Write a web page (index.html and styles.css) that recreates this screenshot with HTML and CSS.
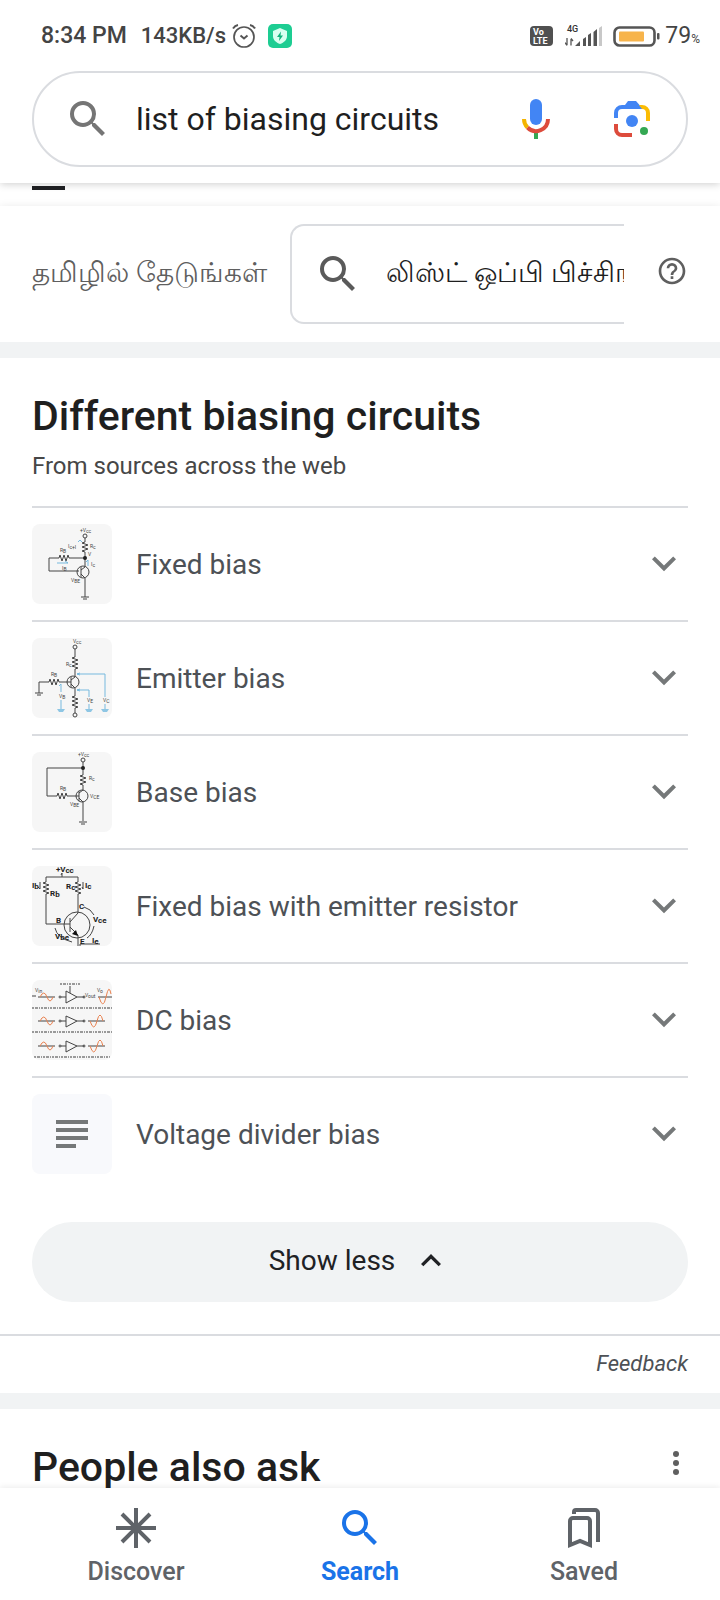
FILE: index.html
```html
<!DOCTYPE html>
<html lang="en">
<head>
<meta charset="utf-8">
<meta name="viewport" content="width=device-width, initial-scale=1">
<title>list of biasing circuits</title>
<link rel="stylesheet" href="styles.css">
</head>
<body>
<svg class="defs" aria-hidden="true">
  <symbol id="search" viewBox="0 0 24 24"><path fill="currentColor" d="M15.5 14h-.79l-.28-.27A6.47 6.47 0 0 0 16 9.500 6.500 6.500 0 1 0 9.500 16c1.610 0 3.090-.59 4.230-1.570l.27.28v.79l5 4.990L20.490 19l-4.990-5zm-6 0C7.010 14 5 11.990 5 9.500S7.010 5 9.500 5 14 7.010 14 9.500 11.990 14 9.500 14z"/></symbol>
  <symbol id="chevron" viewBox="0 0 24 24"><path fill="currentColor" d="M16.590 8.200 12 12.780 7.410 8.200 6 9.610l6 6 6-6z"/></symbol>
</svg>
<div class="app">
  <header class="header">
    <div class="status">
      <span class="time">8:34 PM</span>
      <span class="speed">143KB/s</span>
      <svg class="alarm" viewBox="0 0 24 24" fill="none" stroke="#555" stroke-width="1.700"><circle cx="12" cy="13" r="10"/><path d="M8.500 11.500l3.500 3 3.500-3M1 4.500Q3 1.500 6 1M23 4.500Q21 1.500 18 1" stroke-width="2"/></svg>
      <svg class="shield" viewBox="0 0 24 24"><rect width="24" height="24" rx="5" fill="#1dcd92"/><path fill="#d9fff0" d="M12 4l7 3v5c0 4-3 6.500-7 8-4-1.500-7-4-7-8V7z"/><path fill="#12b37c" d="M13 7.500l-4 5.500h2.500L11 17l4-5.500h-2.500z"/></svg>
      <span class="spacer"></span>
      <svg class="volte" viewBox="0 0 23 20"><rect width="23" height="20" rx="4" fill="#505050"/><g fill="#fff" font-weight="700" font-size="9"><text x="3" y="9">Vo</text><text x="3" y="18">LTE</text></g></svg>
      <svg class="signal" viewBox="0 0 38 24"><text x="2" y="8" font-size="9" fill="#333" font-weight="500">4G</text><path d="M2 14v7M0 18.500L2 21.500M6 21.500V15M8 17L6 14.500" fill="none" stroke="#555" stroke-width="1.300"/><path fill="#555" d="M10 22l5-5v5zM18 15l3-2v9h-3zM23 11l3-2v13h-3zM28.500 8l3.500-3v17h-3.500z"/><path fill="#c8c8c8" d="M34 4l3-2v20h-3z"/></svg>
      <svg class="battery" viewBox="0 0 47 22"><rect x="1.500" y="2.500" width="40" height="18" rx="5" fill="none" stroke="#555" stroke-width="2.600"/><rect x="6" y="6.500" width="25" height="10" rx="1" fill="#f7b44b"/><rect x="44" y="8" width="2.500" height="6.500" rx="1" fill="#555"/></svg>
      <span class="level">79<small>%</small></span>
    </div>
    <form class="searchbar">
      <svg class="icon gray"><use href="#search"/></svg>
      <input class="query" type="text" aria-label="Search" value="list of biasing circuits">
      <button class="plain" type="button" aria-label="Voice search"><svg class="icon" viewBox="0 0 48 48"><rect x="18" y="4" width="12" height="26" rx="6" fill="#4285f4"/><path d="M22 38h4v6h-4z" fill="#34a853"/><path d="M12 24A12 12 0 0 0 15.500 32.500" fill="none" stroke="#f4b400" stroke-width="4"/><path d="M15.500 32.500A12 12 0 0 0 36 24" fill="none" stroke="#dd4b3c" stroke-width="4"/></svg></button>
      <button class="plain" type="button" aria-label="Search with camera"><svg class="icon" viewBox="0 0 48 48"><path d="M6 23v-5a8 8 0 0 1 8-8h3l3-4h8l7 8H14a4 4 0 0 0-4 4v5z" fill="#4285f4"/><path d="M31 10h3a8 8 0 0 1 8 8v8h-4v-8a4 4 0 0 0-4-4z" fill="#fbbc04"/><path d="M6 29h4v5a4 4 0 0 0 4 4h10v4H14a8 8 0 0 1-8-8z" fill="#dd4b3c"/><circle cx="24" cy="26" r="6" fill="#4285f4"/><circle cx="36" cy="36" r="4" fill="#34a853"/></svg></button>
    </form>
  </header>

  <main class="content">
    <div class="tabs"><span class="tab-mark"></span></div>
    <form class="translate">
      <label class="translate-label" for="tamil">தமிழில் தேடுங்கள்</label>
      <div class="translate-box">
        <svg class="icon dark"><use href="#search"/></svg>
        <input id="tamil" class="translate-input" type="text" value="லிஸ்ட் ஒப்பி பிச்சிங்">
      </div>
      <button class="plain help-button" type="button" aria-label="Help"><svg class="help" viewBox="0 0 24 24"><path fill="#5f5f5f" d="M11 18h2v-2h-2v2zm1-16C6.480 2 2 6.480 2 12s4.480 10 10 10 10-4.480 10-10S17.520 2 12 2zm0 18c-4.410 0-8-3.590-8-8s3.590-8 8-8 8 3.590 8 8-3.590 8-8 8zm0-14a4 4 0 0 0-4 4h2a2 2 0 1 1 4 0c0 2-3 1.750-3 5h2c0-2.250 3-2.500 3-5a4 4 0 0 0-4-4z"/></svg></button>
    </form>

    <section class="card">
      <h2 class="title">Different biasing circuits</h2>
      <p class="subtitle">From sources across the web</p>
      <ul class="list">
        <li><button class="row" type="button" aria-expanded="false">
          <svg class="thumb" viewBox="0 0 80 80"><g class="wire"><circle cx="53" cy="12" r="2"/><path d="M53 14v4l-3 1 6 2-6 2 6 2-6 2 3 1v15M53 34H37l-1-3-2 6-2-6-2 6-2-6-1 3H17v13h30M49 43v10M49 46l4-3M49 50l4 4v19M49 73h8M51 75h4"/><circle cx="51" cy="48" r="6"/></g><circle cx="53" cy="34" r="2" fill="#222"/><path class="blue" d="M25 39h11l-3-2M56 42v-6l-2 2M46 18l2-2 2 2"/><g class="note"><text x="48" y="8">+V<tspan dy="1">cc</tspan></text><text x="58" y="24">R<tspan dy="1">c</tspan></text><text x="36" y="24">I<tspan dy="1">c</tspan>+I</text><text x="28" y="28">R<tspan dy="1">B</tspan></text><text x="30" y="46">I<tspan dy="1">B</tspan></text><text x="59" y="42">I<tspan dy="1">c</tspan></text><text x="56" y="32">V</text><text x="39" y="58">V<tspan dy="1">BE</tspan></text></g></svg>
          <span class="name">Fixed bias</span><svg class="chev"><use href="#chevron"/></svg></button></li>
        <li><button class="row" type="button" aria-expanded="false">
          <svg class="thumb" viewBox="0 0 80 80"><path class="blue" d="M48 35l-3 1 3 1M45 36h28v23M73 66v5M48 51l-3 1 3 1M45 52h12v7M57 66v5M29 54v-8l-2 2M29 62v9"/><path class="earth" d="M25 71h8l-2 3h-4zM53 71h8l-2 3h-4zM69 71h8l-2 3h-4z"/><g class="wire"><circle cx="43" cy="9" r="2"/><circle cx="43" cy="77" r="2"/><path d="M43 11v8l-3 1 6 2-6 2 6 2-6 2 6 2-3 1v8l-4 3M39 46l4 4v8l-3 1 6 2-6 2 6 2-6 2 6 2-3 1v5M39 39v10M39 44H27l-1-3-2 6-2-6-2 6-2-6-1 3H7v11M3 55h8M5 57h4"/><circle cx="41" cy="44" r="6"/></g><g class="note"><text x="41" y="5">V<tspan dy="1">cc</tspan></text><text x="34" y="28">R<tspan dy="1">c</tspan></text><text x="19" y="38">R<tspan dy="1">B</tspan></text><text x="27" y="60">V<tspan dy="1">B</tspan></text><text x="55" y="64">V<tspan dy="1">E</tspan></text><text x="71" y="64">V<tspan dy="1">C</tspan></text></g></svg>
          <span class="name">Emitter bias</span><svg class="chev"><use href="#chevron"/></svg></button></li>
        <li><button class="row" type="button" aria-expanded="false">
          <svg class="thumb" viewBox="0 0 80 80"><g class="wire"><circle cx="51" cy="8" r="2"/><path d="M51 10v13l-3 1 6 2-6 2 6 2-6 2 3 1v5l-4 3M51 16H15v28h10l1-3 2 6 2-6 2 6 2-6 1 3h12M47 39v10M47 46l4 4v19M47 70h8M49 72h4"/><circle cx="50" cy="44" r="6"/></g><circle cx="51" cy="16" r="2" fill="#222"/><g class="note"><text x="46" y="4">+V<tspan dy="1">cc</tspan></text><text x="57" y="28">R<tspan dy="1">c</tspan></text><text x="28" y="38">R<tspan dy="1">B</tspan></text><text x="58" y="46">V<tspan dy="1">CE</tspan></text><text x="38" y="54">V<tspan dy="1">BE</tspan></text></g></svg>
          <span class="name">Base bias</span><svg class="chev"><use href="#chevron"/></svg></button></li>
        <li><button class="row" type="button" aria-expanded="false">
          <svg class="thumb" viewBox="0 0 80 80"><g class="wire"><path d="M30 11V7l-1 2M14 16v-5h32v5M14 16l-3 1 6 2-6 2 6 2-6 2 6 2-3 1v30h24M46 16l-3 1 6 2-6 2 6 2-6 2 6 2-3 1v19l-8 9M38 52v14M38 61l8 8v11M48 80v-2h20M8 16v7l-2-2M51 16v7l-1-2M52 41q7 2 10 8M62 60q-2 9-7 12M23 62q2 10 17 14"/><circle cx="45" cy="59" r="13"/></g><path d="M46 70l-6-2 4-4z" fill="#111"/><g class="note bold"><text x="24" y="6">+V<tspan dy="1">cc</tspan></text><text x="0" y="22">I<tspan dy="1">b</tspan></text><text x="18" y="30">R<tspan dy="1">b</tspan></text><text x="34" y="23">R<tspan dy="1">c</tspan></text><text x="53" y="22">I<tspan dy="1">c</tspan></text><text x="47" y="43">C</text><text x="24" y="57">B</text><text x="61" y="56">V<tspan dy="1">ce</tspan></text><text x="23" y="73">V<tspan dy="1">be</tspan></text><text x="48" y="78">E</text><text x="60" y="77">I<tspan dy="1">e</tspan></text></g></svg>
          <span class="name">Fixed bias with emitter resistor</span><svg class="chev"><use href="#chevron"/></svg></button></li>
        <li><button class="row" type="button" aria-expanded="false">
          <svg class="thumb" viewBox="0 0 80 80"><g class="wire"><path d="M0 16h4M6 17h17M29 17h5v-6l11 6-11 6v-6M45 17h7M66 17h14M38 6v7M6 41h17M29 41h5v-5l11 5-11 6v-6M45 41h7M56 41h17M6 66h17M29 66h5v-5l11 5-11 6v-6M45 66h7M56 66h17"/><circle cx="28" cy="17" r="1"/><circle cx="52" cy="17" r="1"/><circle cx="28" cy="41" r="1"/><circle cx="52" cy="41" r="1"/><circle cx="28" cy="66" r="1"/><circle cx="52" cy="66" r="1"/></g><path class="wave" d="M8 17q4-8 7 0t6 0M8 41q4-8 7 0t6 0M8 66q4-8 7 0t6 0M67 17q4 14 7 0t5-3M58 41q4 12 7 0t6 0M58 66q4 12 7 0t6 0"/><path class="caption" d="M0 28h80M0 52h80M2 77h76M28 4h21"/><g class="note"><text x="3" y="12">V<tspan dy="1">in</tspan></text><text x="53" y="17">V<tspan dy="1">out</tspan></text><text x="65" y="12">V<tspan dy="1">o</tspan></text></g></svg>
          <span class="name">DC bias</span><svg class="chev"><use href="#chevron"/></svg></button></li>
        <li><button class="row" type="button" aria-expanded="false">
          <svg class="thumb pale" viewBox="0 0 80 80"><path fill="#757879" d="M24 26h32v4H24zM24 34h32v4H24zM24 42h32v4H24zM24 50h20v4H24z"/></svg>
          <span class="name">Voltage divider bias</span><svg class="chev"><use href="#chevron"/></svg></button></li>
      </ul>
      <button class="less" type="button">Show less <svg class="chev-up"><use href="#chevron"/></svg></button>
    </section>
    <div class="feedback"><a href="#feedback">Feedback</a></div>
    <section class="ask">
      <h2 class="title">People also ask</h2>
      <button class="plain" type="button" aria-label="More options"><svg class="dots" viewBox="0 0 6 24"><g fill="#5f5f5f"><circle cx="3" cy="3" r="3"/><circle cx="3" cy="12" r="3"/><circle cx="3" cy="21" r="3"/></g></svg></button>
    </section>
  </main>

  <nav class="nav">
    <a class="nav-item" href="#discover"><svg class="icon" viewBox="0 0 48 48" stroke="currentColor" stroke-width="4"><path d="M24 4v40M4 24h40M10 10l28 28M38 10L10 38"/></svg>Discover</a>
    <a class="nav-item active" href="#search-tab" aria-current="page"><svg class="icon"><use href="#search"/></svg>Search</a>
    <a class="nav-item" href="#saved"><svg class="icon" viewBox="0 0 48 48" fill="none" stroke="currentColor" stroke-width="4"><path d="M10 41V17a3 3 0 0 1 3-3h14a3 3 0 0 1 3 3v24l-10-4z"/><path d="M14 10V8a2 2 0 0 1 2-2h19a3 3 0 0 1 3 3v29" /></svg>Saved</a>
  </nav>
</div>
</body>
</html>
```
FILE: styles.css
```css
* { box-sizing: border-box; }
body { margin: 0; background: #fff; color: #1f1f1f; font-family: Roboto, "Noto Sans", sans-serif; }
button, input { font: inherit; color: inherit; border: 0; background: none; padding: 0; margin: 0; }
a { color: inherit; text-decoration: none; }
.defs { position: absolute; width: 0; height: 0; }
.app { display: flex; flex-direction: column; height: 100vh; }

.header { position: relative; z-index: 1; flex: none; background: #fff; padding: 0 32px 16px; box-shadow: 0 1px 8px rgba(0, 0, 0, 0.2); }
.status { display: flex; align-items: center; height: 71px; margin: 0 -12px 0 9px; color: #444; font-weight: 500; }
.time { font-size: 23px; }
.speed { font-size: 22px; margin-left: 14px; }
.alarm { width: 24px; height: 24px; margin-left: 6px; }
.shield { width: 24px; height: 24px; margin-left: 12px; }
.spacer { flex: 1; }
.volte { width: 23px; height: 20px; margin-right: 12px; }
.signal { width: 38px; height: 24px; margin-right: 10px; }
.battery { width: 47px; height: 22px; margin-right: 5px; }
.level { font-size: 23px; font-weight: 400; }
.level small { font-size: 12px; }

.searchbar { display: flex; align-items: center; height: 96px; padding: 0 30px; border: 2px solid #dadce0; border-radius: 48px; }
.icon { display: block; flex: none; width: 48px; height: 48px; }
.gray { color: #757575; }
.dark { color: #5a5a5a; }
.plain { display: block; flex: none; }
.query { flex: 1; min-width: 0; margin-left: 24px; font-size: 32px; outline: 0; }
.searchbar .plain + .plain { margin-left: 48px; }

.content { flex: 1; min-height: 0; overflow: hidden; }
.tabs { height: 23px; padding: 3px 32px 0; }
.tab-mark { display: block; width: 33px; height: 4px; background: #202124; }
.translate { display: flex; align-items: center; padding: 18px 32px; box-shadow: 0 0 8px rgba(0, 0, 0, 0.08); }
.translate-label { flex: none; font-size: 28px; color: #5f5f5f; margin-right: 23px; }
.translate-box { display: flex; align-items: center; flex: 1; min-width: 0; height: 100px; margin-right: 32px; padding-left: 22px; border: 2px solid #dadce0; border-right: 0; border-radius: 14px 0 0 14px; }
.translate-input { flex: 1; min-width: 0; margin-left: 24px; font-size: 28px; outline: 0; }
.help-button { padding-bottom: 6px; }
.help { display: block; width: 32px; height: 32px; }

.card { border-top: 16px solid #f1f3f4; padding: 34px 32px 32px; border-bottom: 2px solid #dadce0; }
.title { margin: 0; font-size: 41px; line-height: 48px; font-weight: 500; }
.subtitle { margin: 8px 0 22px; font-size: 24px; line-height: 36px; color: #474747; }
.list { list-style: none; margin: 0; padding: 0; }
.row { display: flex; align-items: center; width: 100%; padding: 16px 0; border-top: 2px solid #dadce0; text-align: left; font-size: 28px; color: #4d5156; }
.thumb { flex: none; width: 80px; height: 80px; border-radius: 8px; background: #f6f6f6; }
.pale { background: #f8f9fc; }
.name { flex: 1; margin-left: 24px; }
.chev { width: 48px; height: 48px; color: #757879; }
.wire { fill: none; stroke: #444; stroke-width: 1; }
.blue { fill: none; stroke: #76b9de; stroke-width: 1; }
.earth { fill: #8ec6e4; }
.note { font-size: 5px; fill: #444; }
.bold { font-size: 8px; font-weight: 700; fill: #222; }
.wave { fill: none; stroke: #e8804f; stroke-width: 1; }
.caption { fill: none; stroke: #999; stroke-width: 2; stroke-dasharray: 2 1 3 1 1 1; }

.less { display: flex; align-items: center; justify-content: center; gap: 16px; width: 100%; height: 80px; margin-top: 32px; padding-bottom: 4px; border-radius: 40px; background: #f1f3f4; font-size: 28px; color: #202124; }
.chev-up { width: 40px; height: 40px; transform: rotate(180deg); }

.feedback { padding: 12px 32px 13px; text-align: right; font-size: 22px; line-height: 32px; font-style: italic; color: #4d5156; }
.ask { display: flex; align-items: flex-start; justify-content: space-between; border-top: 16px solid #f1f3f4; padding: 34px 32px; }
.ask .plain { padding: 8px 9px; }
.dots { display: block; width: 6px; height: 24px; }

.nav { position: relative; z-index: 1; flex: none; display: flex; height: 112px; padding: 16px 24px 0; background: #fff; box-shadow: 0 -1px 6px rgba(0, 0, 0, 0.08); color: #5f6368; }
.nav-item { flex: 1; display: flex; flex-direction: column; align-items: center; gap: 4px; font-size: 25px; line-height: 32px; font-weight: 500; }
.active { color: #1a73e8; font-weight: 700; }
```
